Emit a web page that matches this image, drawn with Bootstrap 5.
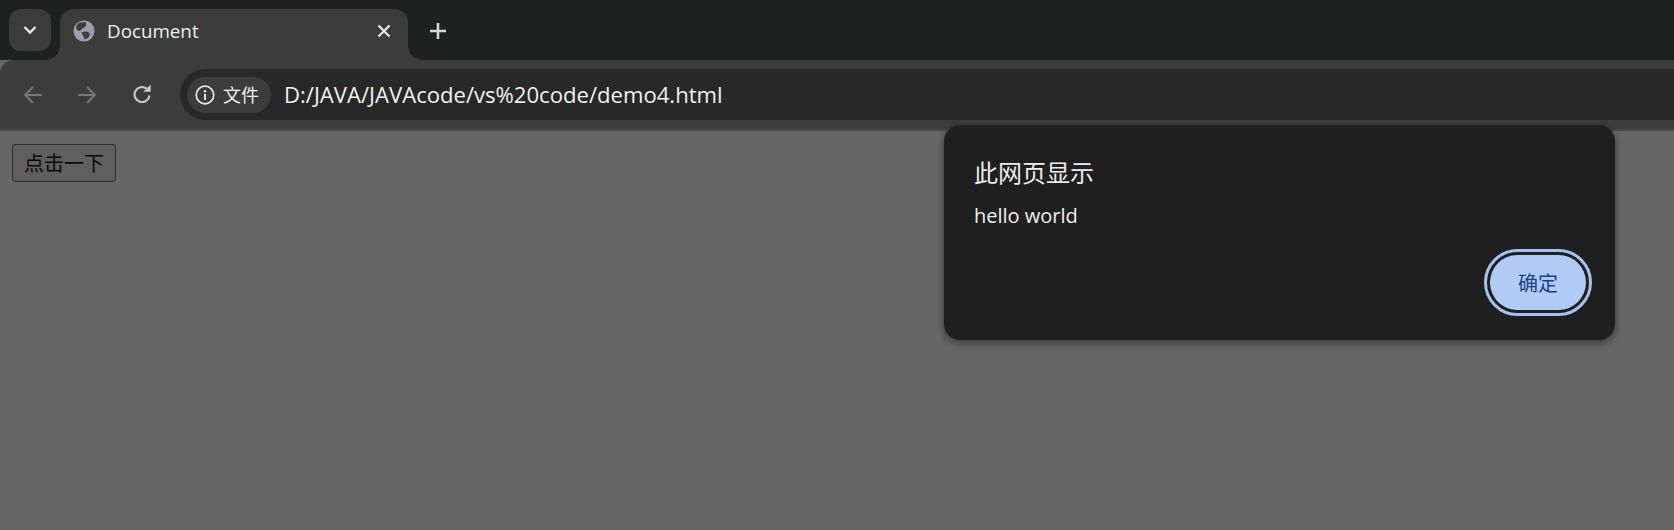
<!DOCTYPE html>
<html lang="zh-CN">
<head>
<meta charset="utf-8">
<title>Document</title>
<link href="https://cdn.jsdelivr.net/npm/bootstrap@5.3.0/dist/css/bootstrap.min.css" rel="stylesheet">
<style>
html,body{height:100%;}
body{background:#666;overflow:hidden;font-family:"Open Sans","Noto Sans CJK SC",sans-serif;color:#e8eaed;position:relative;}
.strip{height:60px;background:#1f2120;padding:9px 0 0 9px;}
.tab-list-btn{width:42px;height:42px;background:#3c3c3c;border-radius:12px;}
.doc-tab{width:348px;height:51px;margin-left:9px;background:#3c3c3c;border-radius:14px 14px 0 0;padding:0 13px 7px;position:relative;}
.doc-tab::before,.doc-tab::after{content:"";position:absolute;bottom:0;width:14px;height:14px;}
.doc-tab::before{left:-14px;background:radial-gradient(circle at 0 0,transparent 13.5px,#3c3c3c 14px);}
.doc-tab::after{right:-14px;background:radial-gradient(circle at 100% 0,transparent 13.5px,#3c3c3c 14px);}
.doc-title{font-size:18.8px;margin-left:12px;color:#ededed;line-height:24px;}
.new-tab{margin-left:18px;width:24px;height:44px;}
.toolbar{height:71px;background:#3c3c3c;border-top-left-radius:14px;border-bottom:2px solid #484848;padding:9px 0 0 18px;}
.nav-ico{width:30px;height:51px;margin-right:24px;}
.nav-ico-last{margin-right:0;width:24px;margin-left:2px;padding-bottom:3px;}
.omni{height:51px;background:#282828;border-radius:26px 0 0 26px;margin-left:28px;padding-left:7px;}
.chip{width:84px;height:36px;background:#3c3c3c;border-radius:18px;padding-left:8px;font-size:18px;color:#f0f0f0;}
.chip-text{margin-left:8px;line-height:36px;}
.url{font-size:22.1px;margin:0 0 2px 13px;color:#f0f0f0;line-height:36px;}
.page-btn{margin:13px 0 0 12px;width:104px;height:38px;padding:0;font-size:20px;line-height:36px;color:#0a0a0a;background:#5f5f5f;border:1px solid #2c2c2c;border-radius:3px;display:block;font-family:"Noto Sans CJK SC",sans-serif;}
.dlg{position:absolute;left:944px;top:125px;width:671px;height:215px;background:#1f1f1f;border-radius:16px;box-shadow:0 3px 8px rgba(0,0,0,.45);padding:31px 22px 24px 30px;}
.dlg-title{font-size:24px;line-height:32px;color:#ededed;font-family:"Noto Sans CJK SC",sans-serif;}
.dlg-msg{font-size:20px;line-height:28px;margin-top:14px;color:#f0f0f0;}
.ok-btn{position:absolute;left:546px;top:130px;width:96px;height:55px;padding:0;border:0;border-radius:28px;background:#b1cbf6;color:#1a3f8a;font-size:20px;outline:3px solid #a5c2ee;outline-offset:3px;font-family:"Noto Sans CJK SC",sans-serif;}
</style>
</head>
<body>
<div class="strip d-flex align-items-start">
  <div class="tab-list-btn d-flex align-items-center justify-content-center">
    <svg width="14" height="10" viewBox="0 0 14 10"><path d="M1.500 2 7 7.500 12.500 2" fill="none" stroke="#e8e8e8" stroke-width="2.400"/></svg>
  </div>
  <div class="doc-tab d-flex align-items-center">
    <svg width="22" height="22" viewBox="0 0 22 22"><circle cx="11" cy="11" r="10.500" fill="#98a1ad"/><path d="M6 2.800 12.500 2c1 1.500 1 3.500-.5 5-1.500 1.300-3.500 1.500-4 3-.7 1-2 1-3.300.5C3.500 10 3 8.500 3.200 6.800 3.800 5 4.800 3.700 6 2.800ZM9 12.200c2-.8 5-1.300 6.500 0 1.500 1.300 1.500 3 .3 4.500-1 1.500-2.500 2.500-4 2.500-1-1-1-2.500-1.600-3.400-.7-1-2-2.500-1.200-3.600Z" fill="#3c3c3c"/></svg>
    <span class="doc-title flex-grow-1">Document</span>
    <svg class="me-1" width="14" height="14" viewBox="0 0 14 14"><path d="M1.500 1.500l11 11M12.500 1.500l-11 11" stroke="#e8e8e8" stroke-width="2.200"/></svg>
  </div>
  <div class="new-tab d-flex align-items-center justify-content-center">
    <svg width="16" height="16" viewBox="0 0 16 16"><path d="M8 0v16M0 8h16" stroke="#d8d8d8" stroke-width="2.600"/></svg>
  </div>
</div>
<div class="toolbar d-flex align-items-start">
  <div class="nav-ico d-flex align-items-center justify-content-center">
    <svg width="20" height="20" viewBox="0 0 20 20"><path d="M19 10H2M10 2l-8 8 8 8" fill="none" stroke="#757575" stroke-width="2"/></svg>
  </div>
  <div class="nav-ico d-flex align-items-center justify-content-center">
    <svg width="20" height="20" viewBox="0 0 20 20"><path d="M1 10h17M10 2l8 8-8 8" fill="none" stroke="#757575" stroke-width="2"/></svg>
  </div>
  <div class="nav-ico nav-ico-last d-flex align-items-center justify-content-center">
    <svg width="22" height="20" viewBox="0 0 22 20"><path d="M20.500 12.500A7.500 7.500 0 1 1 17.500 5.500" fill="none" stroke="#c7c7c7" stroke-width="2.200"/><path d="M21.700 1.500v7.300h-7.400z" fill="#c7c7c7"/></svg>
  </div>
  <div class="omni flex-grow-1 d-flex align-items-center">
    <div class="chip d-flex align-items-center">
      <svg width="20" height="20" viewBox="0 0 20 20"><circle cx="10" cy="10" r="8.800" fill="none" stroke="#e8e8e8" stroke-width="1.700"/><path d="M10 9v6" stroke="#e8e8e8" stroke-width="1.900"/><circle cx="10" cy="6.200" r="1.200" fill="#e8e8e8"/></svg>
      <span class="chip-text">文件</span>
    </div>
    <span class="url">D:/JAVA/JAVAcode/vs%20code/demo4.html</span>
  </div>
</div>
<button type="button" class="page-btn">点击一下</button>
<div class="dlg">
  <div class="dlg-title">此网页显示</div>
  <div class="dlg-msg">hello world</div>
  <button type="button" class="ok-btn">确定</button>
</div>
<script src="https://cdn.jsdelivr.net/npm/bootstrap@5.3.0/dist/js/bootstrap.bundle.min.js"></script>
</body>
</html>
